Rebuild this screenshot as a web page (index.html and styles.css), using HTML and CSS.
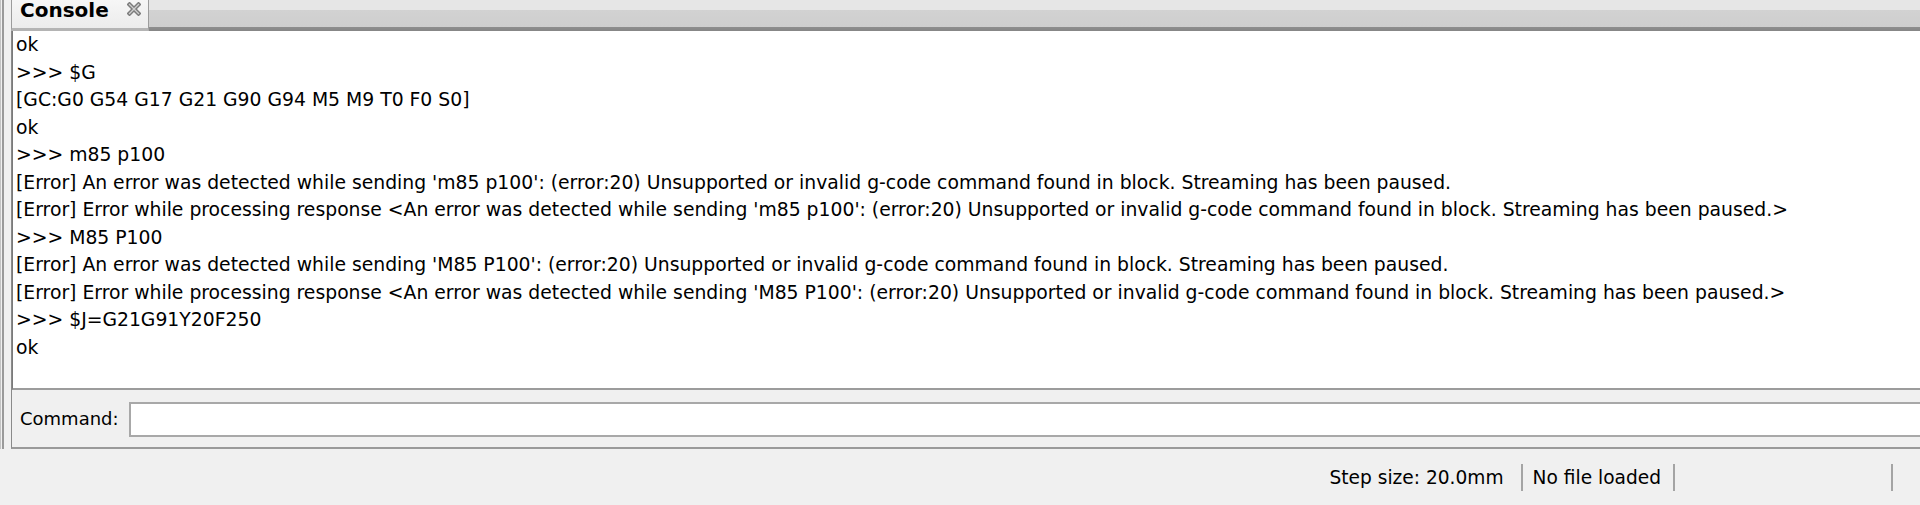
FILE: index.html
```html
<!DOCTYPE html>
<html lang="en">
<head>
    <meta charset="UTF-8">
    <meta name="viewport" content="width=device-width, initial-scale=1.0">
    <title>Console</title>
    <link rel="stylesheet" href="styles.css">
</head>
<body>
    <div class="window">
        <div class="side-edge"></div>
        <div class="dock">
            <div class="tab-bar">
                <div class="tab">
                    <span class="tab-title">Console</span>
                    <svg class="tab-close" width="14" height="14" viewBox="0 0 14 14">
                        <path d="M2.5 2.5 L11.5 11.5 M11.5 2.5 L2.5 11.5" stroke="#7c7c7c" stroke-width="4.2" stroke-linecap="square"/>
                        <path d="M2.5 2.5 L11.5 11.5 M11.5 2.5 L2.5 11.5" stroke="#cfcfcf" stroke-width="1.3" stroke-linecap="square"/>
                    </svg>
                </div>
                <div class="tab-fill"></div>
            </div>
            <div class="panel">
                <div class="console-output">
                    <div>ok</div>
                    <div>&gt;&gt;&gt; $G</div>
                    <div>[GC:G0 G54 G17 G21 G90 G94 M5 M9 T0 F0 S0]</div>
                    <div>ok</div>
                    <div>&gt;&gt;&gt; m85 p100</div>
                    <div>[Error] An error was detected while sending 'm85 p100': (error:20) Unsupported or invalid g-code command found in block. Streaming has been paused.</div>
                    <div>[Error] Error while processing response &lt;An error was detected while sending 'm85 p100': (error:20) Unsupported or invalid g-code command found in block. Streaming has been paused.&gt;</div>
                    <div>&gt;&gt;&gt; M85 P100</div>
                    <div>[Error] An error was detected while sending 'M85 P100': (error:20) Unsupported or invalid g-code command found in block. Streaming has been paused.</div>
                    <div>[Error] Error while processing response &lt;An error was detected while sending 'M85 P100': (error:20) Unsupported or invalid g-code command found in block. Streaming has been paused.&gt;</div>
                    <div>&gt;&gt;&gt; $J=G21G91Y20F250</div>
                    <div>ok</div>
                </div>
                <div class="command-row">
                    <label for="command">Command:</label>
                    <input type="text" id="command">
                </div>
            </div>
        </div>
    </div>
    <div class="status-bar">
        <div class="status-item step">Step size: 20.0mm</div>
        <div class="status-item file">No file loaded</div>
        <div class="status-item blank"></div>
    </div>
</body>
</html>
```

FILE: styles.css
```css
body {
    margin: 0;
    font-family: "DejaVu Sans", sans-serif;
    font-size: 18.8px;
    background-color: #f0f0f0;
    color: #111111;
    overflow: hidden;
}
.window {
    display: flex;
    height: 449px;
}
.side-edge {
    width: 1px;
    border-left: 1px solid #c4c4c4;
    border-right: 2px solid #9a9a9a;
    margin-right: 7px;
}
.dock {
    flex: 1;
    display: flex;
    flex-direction: column;
    min-width: 0;
}
.tab-bar {
    display: flex;
    height: 31px;
}
.tab {
    display: flex;
    align-items: flex-start;
    gap: 18px;
    padding: 0 7px 0 8px;
    height: 28px;
    background: linear-gradient(#f6f6f6, #ececec);
    border-left: 1px solid #9c9c9c;
    border-right: 1px solid #9c9c9c;
    border-bottom: 3px solid #b4b4b4;
}
.tab-title {
    font-weight: bold;
    font-size: 20px;
    line-height: 20px;
    color: #000000;
}
.tab-close {
    margin-top: 2px;
}
.tab-fill {
    flex: 1;
    background: linear-gradient(#e6e6e6 0, #e6e6e6 10px, #d2d2d2 10px, #cecece 27px, #8e8e8e 27px, #868686 31px);
}
.panel {
    flex: 1;
    display: flex;
    flex-direction: column;
    border-left: 1px solid #8a8a8a;
    border-bottom: 2px solid #9a9a9a;
}
.console-output {
    flex: 1;
    background-color: white;
    border-left: 1px solid #7a7a7a;
    border-bottom: 2px solid #9c9c9c;
    padding-left: 3px;
    line-height: 27.5px;
    color: #000000;
    white-space: nowrap;
    overflow: hidden;
}
.command-row {
    display: flex;
    align-items: center;
    gap: 10px;
    height: 57px;
    padding-left: 8px;
}
.command-row label {
    font-size: 18px;
    color: #000000;
}
.command-row input {
    flex: 1;
    height: 35px;
    box-sizing: border-box;
    border: 2px solid #a8a8a8;
    border-right: none;
    background: white;
    outline: none;
    margin-top: 1px;
}
.status-bar {
    display: flex;
    justify-content: flex-end;
    align-items: center;
    height: 56px;
    padding-right: 27px;
}
.status-item {
    font-size: 18.6px;
    line-height: 27px;
    border-right: 2px solid #a4a4a4;
    color: #000000;
}
.status-item.step {
    padding-right: 17px;
}
.status-item.file {
    padding: 0 12px 0 10px;
}
.status-item.blank {
    width: 216px;
    height: 27px;
}
```
